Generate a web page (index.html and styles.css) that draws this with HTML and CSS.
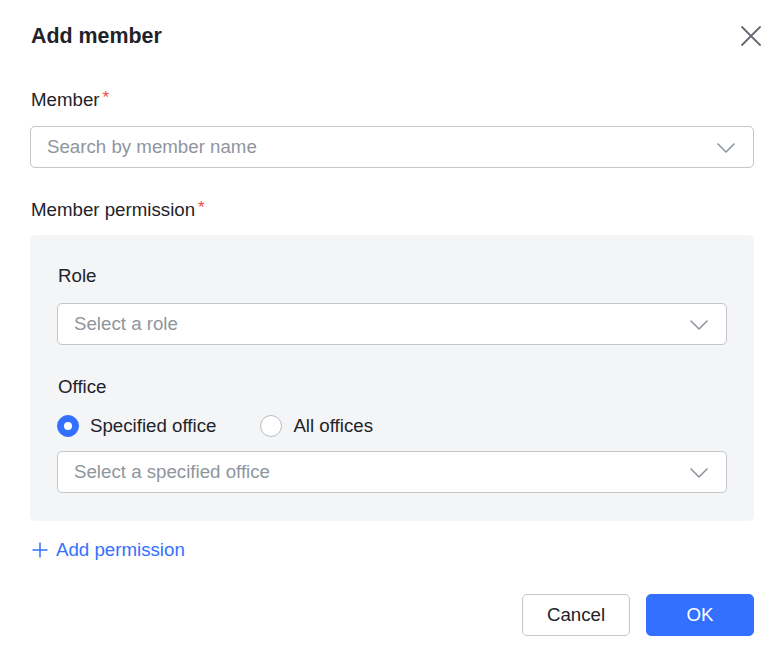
FILE: index.html
```html
<!DOCTYPE html>
<html>
<head>
<meta charset="utf-8">
<link rel="stylesheet" href="styles.css">
</head>
<body>
<div class="dialog">
  <div class="header">
    <div class="title">Add member</div>
    <svg class="close" width="22" height="22" viewBox="0 0 22 22"><path d="M2 2L20 20M20 2L2 20" stroke="#646a73" stroke-width="1.8" fill="none" stroke-linecap="round"/></svg>
  </div>

  <div class="label">Member<span class="req">*</span></div>
  <div class="select">
    <span class="ph">Search by member name</span>
    <svg class="chev" width="18" height="10" viewBox="0 0 18 10"><path d="M1 1L9 9L17 1" stroke="#8f959e" stroke-width="1.6" fill="none" stroke-linecap="round" stroke-linejoin="round"/></svg>
  </div>

  <div class="label label-perm">Member permission<span class="req">*</span></div>
  <div class="panel">
    <div class="sublabel">Role</div>
    <div class="select">
      <span class="ph">Select a role</span>
      <svg class="chev" width="18" height="10" viewBox="0 0 18 10"><path d="M1 1L9 9L17 1" stroke="#8f959e" stroke-width="1.6" fill="none" stroke-linecap="round" stroke-linejoin="round"/></svg>
    </div>
    <div class="sublabel sublabel-office">Office</div>
    <div class="radios">
      <div class="radio"><span class="dot on"></span><span>Specified office</span></div>
      <div class="radio"><span class="dot"></span><span>All offices</span></div>
    </div>
    <div class="select">
      <span class="ph">Select a specified office</span>
      <svg class="chev" width="18" height="10" viewBox="0 0 18 10"><path d="M1 1L9 9L17 1" stroke="#8f959e" stroke-width="1.6" fill="none" stroke-linecap="round" stroke-linejoin="round"/></svg>
    </div>
  </div>

  <div class="add">
    <svg width="16" height="16" viewBox="0 0 16 16"><path d="M8 0.5V15.5M0.5 8H15.5" stroke="#3370ff" stroke-width="1.5" fill="none"/></svg>
    <span>Add permission</span>
  </div>

  <div class="footer">
    <button class="btn btn-cancel">Cancel</button>
    <button class="btn btn-ok">OK</button>
  </div>
</div>
</body>
</html>
```

FILE: styles.css
```css
html, body {
  margin: 0;
  padding: 0;
  background: #ffffff;
}
body {
  font-family: "Liberation Sans", Arial, sans-serif;
  color: #1f2329;
  font-size: 18.7px;
}
.dialog {
  padding: 22px 22px 0 30px;
}
.header {
  display: flex;
  align-items: center;
  justify-content: space-between;
  height: 28px;
}
.title {
  font-size: 21.4px;
  font-weight: bold;
  line-height: 28px;
  padding-left: 1px;
}
.close {
  margin-right: -8px;
}
.label {
  height: 24px;
  line-height: 24px;
  margin-top: 38px;
  padding-left: 1px;
}
.req {
  color: #f54a45;
  margin-left: 3px;
  font-size: 17px;
  line-height: 0;
  position: relative;
  top: -3px;
}
.label-perm {
  margin-top: 30px;
}
.select {
  margin-top: 14px;
  height: 40px;
  border: 1px solid #c3c6cb;
  border-radius: 5px;
  background: #fff;
  display: flex;
  align-items: center;
  justify-content: space-between;
  padding: 0 18px 0 16px;
}
.ph {
  color: #8f959e;
}
.chev {
  margin-top: 1px;
}
.panel {
  margin-top: 13px;
  background: #f4f5f7;
  border-radius: 5px;
  padding: 29px 27px 28px 27px;
}
.panel .select {
  margin-top: 15px;
}
.sublabel {
  line-height: 24px;
  padding-left: 1px;
}
.sublabel-office {
  margin-top: 30px;
}
.radios {
  display: flex;
  align-items: center;
  margin-top: 15px;
  height: 24px;
}
.radio {
  display: flex;
  align-items: center;
  margin-right: 44px;
}
.dot {
  width: 22px;
  height: 22px;
  border-radius: 50%;
  border: 1px solid #b8bcc2;
  background: #fff;
  margin-right: 11px;
  box-sizing: border-box;
  position: relative;
}
.dot.on {
  background: #3370ff;
  border-color: #3370ff;
}
.dot.on::after {
  content: "";
  position: absolute;
  left: 50%;
  top: 50%;
  width: 8px;
  height: 8px;
  margin: -4px 0 0 -4px;
  border-radius: 50%;
  background: #fff;
}
.panel .radios + .select {
  margin-top: 13px;
}
.add {
  display: flex;
  align-items: center;
  margin-top: 17px;
  color: #3370ff;
  line-height: 24px;
  padding-left: 2px;
}
.add svg {
  margin-right: 8px;
}
.footer {
  display: flex;
  justify-content: flex-end;
  margin-top: 32px;
  gap: 16px;
}
.btn {
  font-family: "Liberation Sans", Arial, sans-serif;
  font-size: 18.7px;
  height: 42px;
  width: 108px;
  border-radius: 5px;
  cursor: pointer;
}
.btn-cancel {
  background: #fff;
  border: 1px solid #c3c6cb;
  color: #1f2329;
}
.btn-ok {
  background: #3370ff;
  border: 1px solid #3370ff;
  color: #fff;
}
```
